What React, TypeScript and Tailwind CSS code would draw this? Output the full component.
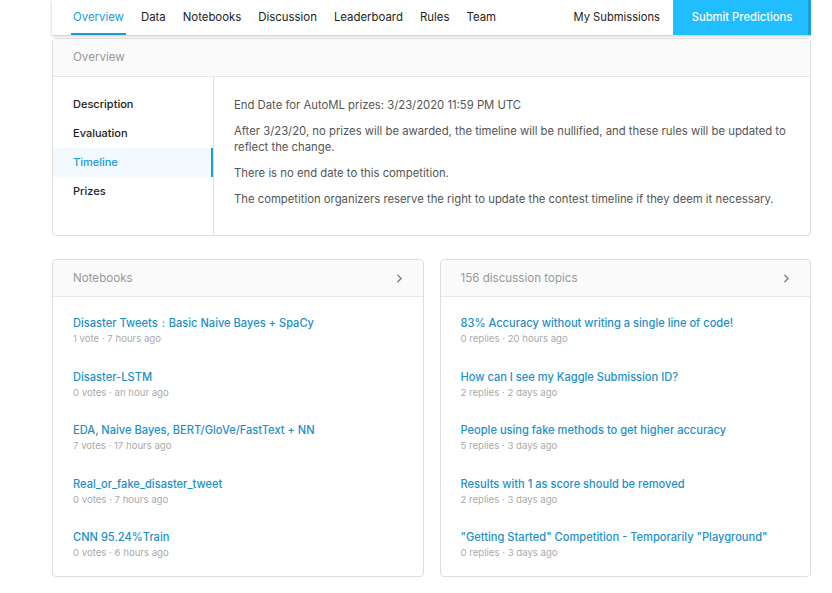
import { ChevronRight } from 'lucide-react';

const tabs = ['Overview', 'Data', 'Notebooks', 'Discussion', 'Leaderboard', 'Rules', 'Team'];
const sections = ['Description', 'Evaluation', 'Timeline', 'Prizes'];

const notebooks = [
  { title: 'Disaster Tweets：Basic Naive Bayes + SpaCy', meta: '1 vote · 7 hours ago' },
  { title: 'Disaster-LSTM', meta: '0 votes · an hour ago' },
  { title: 'EDA, Naive Bayes, BERT/GloVe/FastText + NN', meta: '7 votes · 17 hours ago' },
  { title: 'Real_or_fake_disaster_tweet', meta: '0 votes · 7 hours ago' },
  { title: 'CNN 95.24%Train', meta: '0 votes · 6 hours ago' },
];

const topics = [
  { title: '83% Accuracy without writing a single line of code!', meta: '0 replies · 20 hours ago' },
  { title: 'How can I see my Kaggle Submission ID?', meta: '2 replies · 2 days ago' },
  { title: 'People using fake methods to get higher accuracy', meta: '5 replies · 3 days ago' },
  { title: 'Results with 1 as score should be removed', meta: '2 replies · 3 days ago' },
  { title: '"Getting Started" Competition - Temporarily "Playground"', meta: '0 replies · 3 days ago' },
];

function ListCard({ heading, items }: { heading: string; items: { title: string; meta: string }[] }) {
  return (
    <div className="flex-1 rounded border border-[#dedede] bg-white">
      <div className="flex h-[37px] items-center justify-between rounded-t border-b border-[#e6e6e6] bg-[#fafafa] pl-5 pr-[17px] pt-[1px]">
        <span className="text-[11.6px] text-[#999]">{heading}</span>
        <ChevronRight size={13} strokeWidth={3} className="text-[#888]" />
      </div>
      <div className="flex flex-col gap-[21.5px] px-5 pt-[18px] pb-[15px]">
        {items.map((it) => (
          <div key={it.title}>
            <div className="text-[11.1px] font-medium leading-4 text-[#1e8fc8]">{it.title}</div>
            <div className="text-[9.6px] leading-4 text-[#aaa]">{it.meta}</div>
          </div>
        ))}
      </div>
    </div>
  );
}

export default function App() {
  return (
    <div className="min-h-[593px] bg-white font-['Inter',sans-serif]">
      <div className="ml-[52px] w-[759px]">
        {/* top tab bar */}
        <div className="flex h-[35px] items-stretch bg-white shadow-[0_1px_3px_rgba(0,0,0,0.25)]">
          <div className="ml-[19px] flex items-stretch gap-[13px]">
            {tabs.map((t, i) => (
              <div
                key={t}
                className={`flex items-center border-b-2 px-0.5 pt-[2px] text-[11.4px] ${
                  i === 0 ? 'border-[#1a9ad6] text-[#1a9ad6]' : 'border-transparent text-[#222]'
                }`}
              >
                {t}
              </div>
            ))}
          </div>
          <div className="ml-auto flex items-center pr-[13px] text-[11.2px] text-[#222]">My Submissions</div>
          <div className="flex w-[138px] items-center justify-center bg-[#20beff] text-[11.2px] font-medium text-white shadow-[inset_-3px_0_0_#1a9fd6]">
            Submit Predictions
          </div>
        </div>

        {/* overview card */}
        <div className="mt-[3px] rounded border border-[#dedede] bg-white">
          <div className="flex h-[38px] items-center border-b border-[#e6e6e6] bg-[#fafafa] pl-5 text-[11.6px] text-[#999]">
            Overview
          </div>
          <div className="flex">
            <div className="w-[161px] border-r border-[#e0e0e0] pt-[13px] pb-[29px]">
              {sections.map((s) => (
                <div
                  key={s}
                  className={`flex h-[29px] items-center pl-5 text-[11px] font-medium ${
                    s === 'Timeline'
                      ? 'border-r-2 border-[#1a9ad6] bg-[#f2faff] text-[#1a9ad6]'
                      : 'text-[#222]'
                  }`}
                >
                  {s}
                </div>
              ))}
            </div>
            <div className="flex-1 space-y-[10px] pt-5 pl-5 pr-5 text-[11.3px] leading-4 text-[#555]">
              <p>End Date for AutoML prizes: 3/23/2020 11:59 PM UTC</p>
              <p>
                After 3/23/20, no prizes will be awarded, the timeline will be nullified, and these rules will be updated to
                reflect the change.
              </p>
              <p>There is no end date to this competition.</p>
              <p>The competition organizers reserve the right to update the contest timeline if they deem it necessary.</p>
            </div>
          </div>
        </div>

        {/* bottom cards */}
        <div className="mt-[23px] flex gap-4">
          <ListCard heading="Notebooks" items={notebooks} />
          <ListCard heading="156 discussion topics" items={topics} />
        </div>
      </div>
    </div>
  );
}
